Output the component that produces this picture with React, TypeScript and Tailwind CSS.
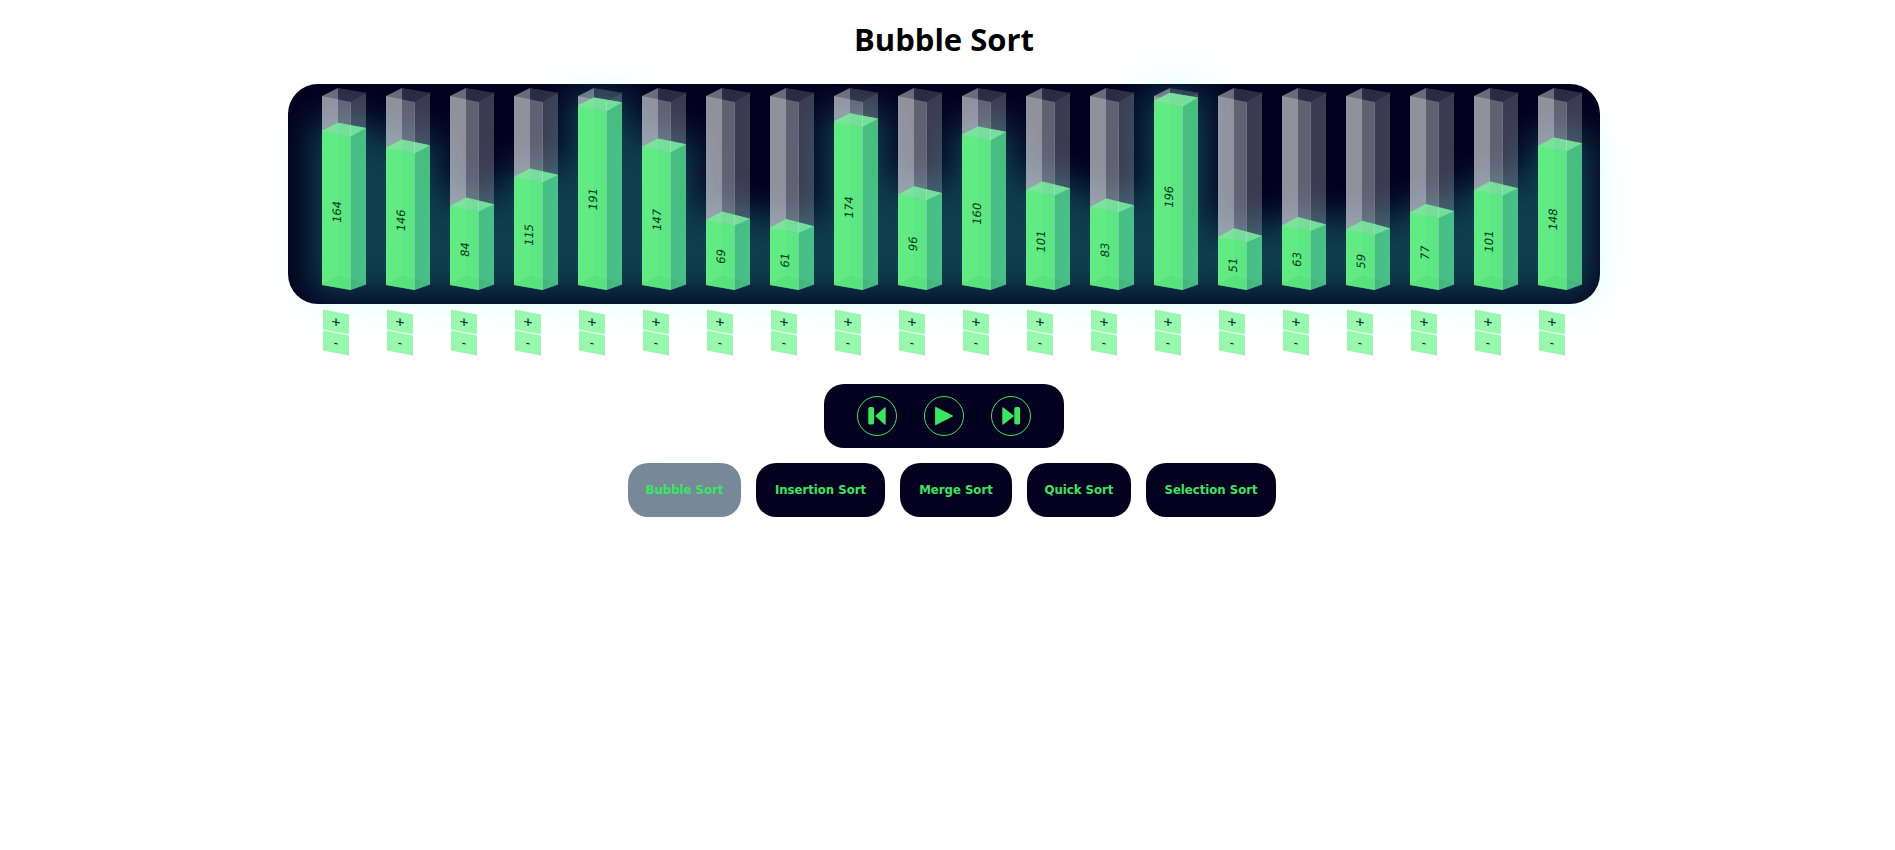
import React from 'react';

const values = [164, 146, 84, 115, 191, 147, 69, 61, 174, 96, 160, 101, 83, 196, 51, 63, 59, 77, 101, 148];
const algorithms = [
  { name: 'Bubble Sort', width: 'w-[113px]' },
  { name: 'Insertion Sort', width: 'w-[129px]' },
  { name: 'Merge Sort', width: 'w-[112px]' },
  { name: 'Quick Sort', width: 'w-[104px]' },
  { name: 'Selection Sort', width: 'w-[130px]' },
];

const BOTTOM = 201;
const TOP = 12;

// corners of a horizontal slice of the box at height y, slight perspective towards the top
const slice = (y: number) => {
  const t = (BOTTOM - y) / (BOTTOM - TOP);
  return {
    left: [0, y],
    front: [28.5, y + 5 + t],
    right: [44, y - 0.5 - 2.8 * t],
    back: [16, y - 9 + t],
  };
};

const pts = (...p: number[][]) => p.map(c => c.join(',')).join(' ');

const Bar: React.FC<{ value: number }> = ({ value }) => {
  const height = value * 0.94;
  const y = BOTTOM - height;
  const floor = slice(BOTTOM);
  const lid = slice(TOP);
  const surface = slice(y);

  return (
    <div className="relative w-[44px] h-[220px]">
      <div
        className="absolute left-0 w-[44px] shadow-[0_0_36px_11px_rgba(64,255,230,0.25)]"
        style={{ top: y, height }}
      />
      <svg width="44" height="220" className="absolute inset-0 overflow-visible">
        {/* glass box, back faces */}
        <polygon points={pts(lid.left, lid.back, floor.back, floor.left)} fill="#fff" fillOpacity="0.42" />
        <polygon points={pts(lid.back, lid.right, floor.right, floor.back)} fill="#fff" fillOpacity="0.17" />

        {/* glass box, front faces */}
        <polygon points={pts(lid.left, lid.front, surface.front, surface.left)} fill="#fff" fillOpacity="0.25" />
        <polygon points={pts(lid.front, lid.right, surface.right, surface.front)} fill="#fff" fillOpacity="0.08" />

        {/* liquid */}
        <polygon points={pts(surface.left, surface.back, floor.back, floor.left)} fill="#5fe883" />
        <polygon points={pts(surface.back, surface.right, floor.right, floor.back)} fill="#52cf84" />
        <polygon points={pts(floor.left, floor.back, floor.right, floor.front)} fill="#3fb878" />
        <polygon points={pts(surface.left, surface.front, floor.front, floor.left)} fill="#60ec82" fillOpacity="0.8" />
        <polygon points={pts(surface.front, surface.right, floor.right, floor.front)} fill="#45b882" fillOpacity="0.8" />
        <polygon points={pts(surface.left, surface.back, surface.right, surface.front)} fill="#84e2a2" fillOpacity="0.75" />

        <line x1={lid.front[0]} y1={lid.front[1]} x2={floor.front[0]} y2={floor.front[1]} stroke="#fff" strokeOpacity="0.18" />

        <text
          transform={`matrix(1 0.18 0 1 15 ${y + height / 2 + 4}) rotate(-90)`}
          textAnchor="middle"
          dominantBaseline="central"
          className="fill-[#0d3520] font-['DejaVu_Sans'] text-[11.5px]"
        >
          {value}
        </text>
      </svg>
    </div>
  );
};

const Adjuster: React.FC = () => (
  <div className="w-[44px] pl-px">
    <div className="w-[26px] flex flex-col gap-px skew-y-[11deg] font-['DejaVu_Sans'] text-[12px] leading-none text-black">
      <button className="h-5 bg-[#98f8b0] flex items-center justify-center">+</button>
      <button className="h-5 bg-[#98f8b0] flex items-center justify-center">-</button>
    </div>
  </div>
);

const ControlIcon: React.FC<{ kind: 'prev' | 'play' | 'next' }> = ({ kind }) => (
  <button className="w-10 h-10 rounded-full border border-[#39e75f] flex items-center justify-center">
    <svg width="24" height="24" viewBox="0 0 24 24" fill="#39e75f" stroke="#39e75f" strokeWidth="1.4" strokeLinejoin="round">
      {kind === 'prev' && (
        <>
          <rect x="4" y="3.8" width="4.4" height="16" rx="1" />
          <polygon points="20,4 20,20 11.2,12" />
        </>
      )}
      {kind === 'play' && <polygon points="3.8,3.5 3.8,20.5 20.3,12" />}
      {kind === 'next' && (
        <>
          <polygon points="4,4 4,20 14.2,12" />
          <rect x="16" y="3.8" width="4.4" height="16" rx="1" />
        </>
      )}
    </svg>
  </button>
);

const App: React.FC = () => {
  return (
    <div className="min-h-[850px] bg-white flex flex-col items-center pr-[7px] pt-[18px]">
      <h1 className="font-['Open_Sans'] font-bold text-[31px] leading-[43px] text-black">Bubble Sort</h1>

      <div className="mt-[23px] w-[1312px] h-[220px] rounded-[30px] bg-[#03001f] flex gap-[20px] pl-[34px]">
        {values.map((v, i) => (
          <Bar key={i} value={v} />
        ))}
      </div>

      <div className="mt-[8px] w-[1312px] flex gap-[20px] pl-[34px]">
        {values.map((_, i) => (
          <Adjuster key={i} />
        ))}
      </div>

      <div className="mt-[31px] w-[240px] h-16 rounded-[20px] bg-[#03001f] flex items-center justify-center gap-[27px]">
        <ControlIcon kind="prev" />
        <ControlIcon kind="play" />
        <ControlIcon kind="next" />
      </div>

      <div className="mt-[15px] ml-[16px] flex gap-[15px]">
        {algorithms.map((algo, i) => (
          <button
            key={algo.name}
            className={`h-[54px] ${algo.width} rounded-[20px] font-['DejaVu_Sans_Condensed','Noto_Sans',sans-serif] font-bold text-[13px] text-[#39e75f] ${
              i === 0 ? 'bg-[#778899]' : 'bg-[#03001f]'
            }`}
          >
            {algo.name}
          </button>
        ))}
      </div>
    </div>
  );
};

export default App;
